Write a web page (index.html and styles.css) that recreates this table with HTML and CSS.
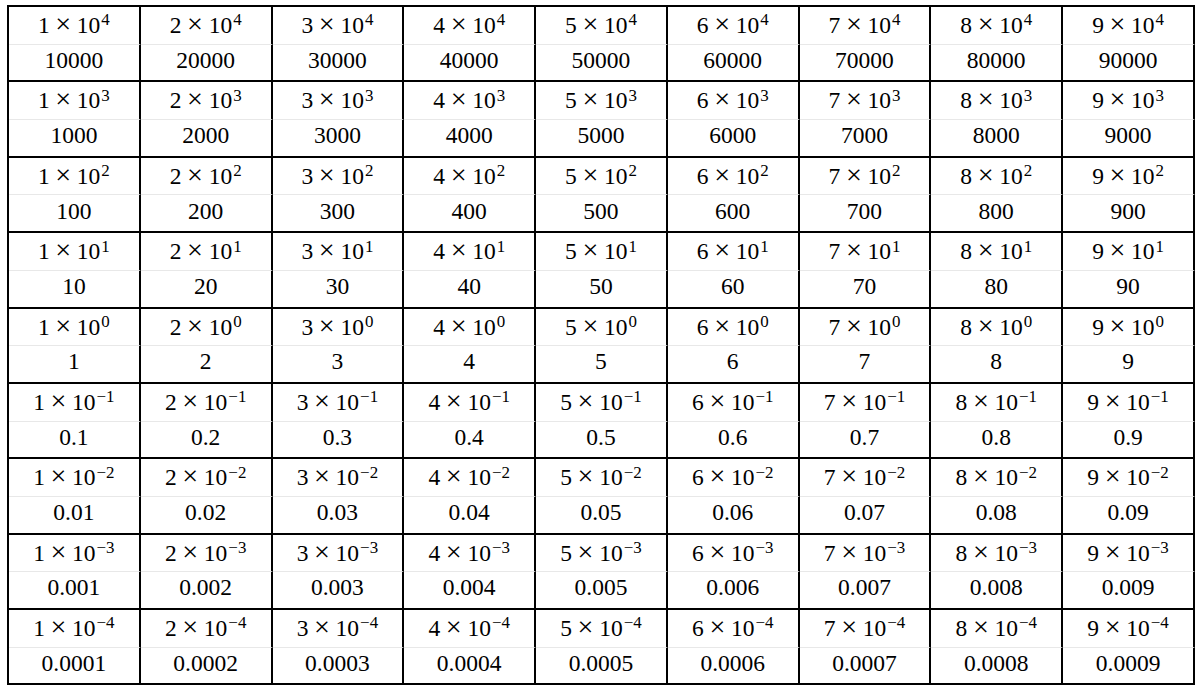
FILE: index.html
```html
<!DOCTYPE html>
<html>
<head>
<meta charset="utf-8">
<link rel="stylesheet" href="styles.css">
</head>
<body>
<table class="grid">
<tbody>
<tr class="exp"><td>1<i>×</i>10<sup>4</sup></td><td>2<i>×</i>10<sup>4</sup></td><td>3<i>×</i>10<sup>4</sup></td><td>4<i>×</i>10<sup>4</sup></td><td>5<i>×</i>10<sup>4</sup></td><td>6<i>×</i>10<sup>4</sup></td><td>7<i>×</i>10<sup>4</sup></td><td>8<i>×</i>10<sup>4</sup></td><td>9<i>×</i>10<sup>4</sup></td></tr>
<tr class="val"><td>10000</td><td>20000</td><td>30000</td><td>40000</td><td>50000</td><td>60000</td><td>70000</td><td>80000</td><td>90000</td></tr>
<tr class="exp"><td>1<i>×</i>10<sup>3</sup></td><td>2<i>×</i>10<sup>3</sup></td><td>3<i>×</i>10<sup>3</sup></td><td>4<i>×</i>10<sup>3</sup></td><td>5<i>×</i>10<sup>3</sup></td><td>6<i>×</i>10<sup>3</sup></td><td>7<i>×</i>10<sup>3</sup></td><td>8<i>×</i>10<sup>3</sup></td><td>9<i>×</i>10<sup>3</sup></td></tr>
<tr class="val"><td>1000</td><td>2000</td><td>3000</td><td>4000</td><td>5000</td><td>6000</td><td>7000</td><td>8000</td><td>9000</td></tr>
<tr class="exp"><td>1<i>×</i>10<sup>2</sup></td><td>2<i>×</i>10<sup>2</sup></td><td>3<i>×</i>10<sup>2</sup></td><td>4<i>×</i>10<sup>2</sup></td><td>5<i>×</i>10<sup>2</sup></td><td>6<i>×</i>10<sup>2</sup></td><td>7<i>×</i>10<sup>2</sup></td><td>8<i>×</i>10<sup>2</sup></td><td>9<i>×</i>10<sup>2</sup></td></tr>
<tr class="val"><td>100</td><td>200</td><td>300</td><td>400</td><td>500</td><td>600</td><td>700</td><td>800</td><td>900</td></tr>
<tr class="exp"><td>1<i>×</i>10<sup>1</sup></td><td>2<i>×</i>10<sup>1</sup></td><td>3<i>×</i>10<sup>1</sup></td><td>4<i>×</i>10<sup>1</sup></td><td>5<i>×</i>10<sup>1</sup></td><td>6<i>×</i>10<sup>1</sup></td><td>7<i>×</i>10<sup>1</sup></td><td>8<i>×</i>10<sup>1</sup></td><td>9<i>×</i>10<sup>1</sup></td></tr>
<tr class="val"><td>10</td><td>20</td><td>30</td><td>40</td><td>50</td><td>60</td><td>70</td><td>80</td><td>90</td></tr>
<tr class="exp"><td>1<i>×</i>10<sup>0</sup></td><td>2<i>×</i>10<sup>0</sup></td><td>3<i>×</i>10<sup>0</sup></td><td>4<i>×</i>10<sup>0</sup></td><td>5<i>×</i>10<sup>0</sup></td><td>6<i>×</i>10<sup>0</sup></td><td>7<i>×</i>10<sup>0</sup></td><td>8<i>×</i>10<sup>0</sup></td><td>9<i>×</i>10<sup>0</sup></td></tr>
<tr class="val"><td>1</td><td>2</td><td>3</td><td>4</td><td>5</td><td>6</td><td>7</td><td>8</td><td>9</td></tr>
<tr class="exp"><td>1<i>×</i>10<sup>−1</sup></td><td>2<i>×</i>10<sup>−1</sup></td><td>3<i>×</i>10<sup>−1</sup></td><td>4<i>×</i>10<sup>−1</sup></td><td>5<i>×</i>10<sup>−1</sup></td><td>6<i>×</i>10<sup>−1</sup></td><td>7<i>×</i>10<sup>−1</sup></td><td>8<i>×</i>10<sup>−1</sup></td><td>9<i>×</i>10<sup>−1</sup></td></tr>
<tr class="val"><td>0.1</td><td>0.2</td><td>0.3</td><td>0.4</td><td>0.5</td><td>0.6</td><td>0.7</td><td>0.8</td><td>0.9</td></tr>
<tr class="exp"><td>1<i>×</i>10<sup>−2</sup></td><td>2<i>×</i>10<sup>−2</sup></td><td>3<i>×</i>10<sup>−2</sup></td><td>4<i>×</i>10<sup>−2</sup></td><td>5<i>×</i>10<sup>−2</sup></td><td>6<i>×</i>10<sup>−2</sup></td><td>7<i>×</i>10<sup>−2</sup></td><td>8<i>×</i>10<sup>−2</sup></td><td>9<i>×</i>10<sup>−2</sup></td></tr>
<tr class="val"><td>0.01</td><td>0.02</td><td>0.03</td><td>0.04</td><td>0.05</td><td>0.06</td><td>0.07</td><td>0.08</td><td>0.09</td></tr>
<tr class="exp"><td>1<i>×</i>10<sup>−3</sup></td><td>2<i>×</i>10<sup>−3</sup></td><td>3<i>×</i>10<sup>−3</sup></td><td>4<i>×</i>10<sup>−3</sup></td><td>5<i>×</i>10<sup>−3</sup></td><td>6<i>×</i>10<sup>−3</sup></td><td>7<i>×</i>10<sup>−3</sup></td><td>8<i>×</i>10<sup>−3</sup></td><td>9<i>×</i>10<sup>−3</sup></td></tr>
<tr class="val"><td>0.001</td><td>0.002</td><td>0.003</td><td>0.004</td><td>0.005</td><td>0.006</td><td>0.007</td><td>0.008</td><td>0.009</td></tr>
<tr class="exp"><td>1<i>×</i>10<sup>−4</sup></td><td>2<i>×</i>10<sup>−4</sup></td><td>3<i>×</i>10<sup>−4</sup></td><td>4<i>×</i>10<sup>−4</sup></td><td>5<i>×</i>10<sup>−4</sup></td><td>6<i>×</i>10<sup>−4</sup></td><td>7<i>×</i>10<sup>−4</sup></td><td>8<i>×</i>10<sup>−4</sup></td><td>9<i>×</i>10<sup>−4</sup></td></tr>
<tr class="val"><td>0.0001</td><td>0.0002</td><td>0.0003</td><td>0.0004</td><td>0.0005</td><td>0.0006</td><td>0.0007</td><td>0.0008</td><td>0.0009</td></tr>
</tbody>
</table>
</body>
</html>
```
FILE: styles.css
```css
html, body {
  margin: 0;
  padding: 0;
  background: #ffffff;
}
body {
  padding: 5px 0 0 7px;
  font-family: "Liberation Serif", "Times New Roman", serif;
  color: #000000;
}
.grid {
  width: 1188px;
  table-layout: fixed;
  border-collapse: separate;
  border-spacing: 0;
  border-top: 2px solid #000000;
  border-left: 2px solid #000000;
  font-size: 23.5px;
}
.grid td {
  box-sizing: border-box;
  padding: 0;
  text-align: center;
  vertical-align: middle;
  border-right: 2px solid #000000;
  line-height: 1;
  white-space: nowrap;
}
.exp td {
  height: 37.7px;
  border-bottom: 1px solid #e8e8e8;
  padding-top: 1px;
}
.val td {
  height: 37.7px;
  border-bottom: 2px solid #000000;
  padding-bottom: 4px;
}
.grid i {
  font-style: normal;
  font-size: 1.2em;
  line-height: 0;
  margin: 0 0.2em;
}
.grid sup {
  font-size: 0.72em;
  line-height: 0;
  vertical-align: 0.45em;
  margin-left: 1px;
}
```
